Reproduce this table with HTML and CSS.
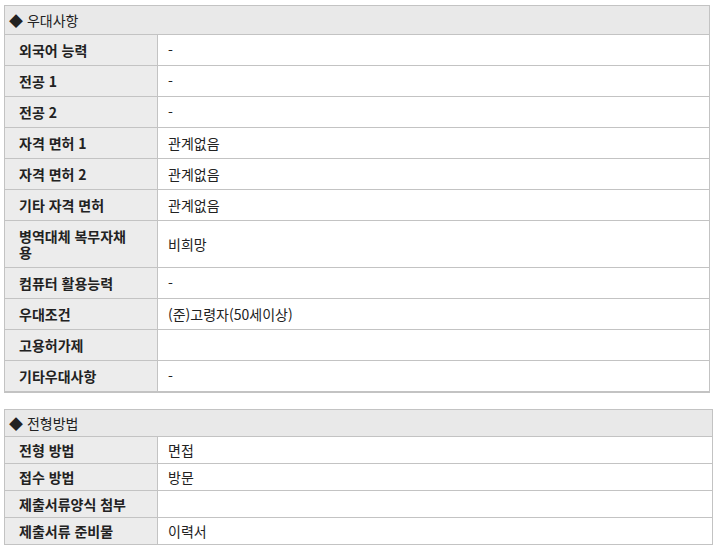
FILE: index.html
```html
<!DOCTYPE html>
<html lang="ko">
<head>
<meta charset="utf-8">
<link rel="stylesheet" href="styles.css">
</head>
<body>
<table class="info info-first">
  <colgroup><col class="c-label"><col class="c-value"></colgroup>
  <tr><th colspan="2" class="sec">◆ 우대사항</th></tr>
  <tr><th>외국어 능력</th><td>-</td></tr>
  <tr><th>전공 1</th><td>-</td></tr>
  <tr><th>전공 2</th><td>-</td></tr>
  <tr><th>자격 면허 1</th><td>관계없음</td></tr>
  <tr><th>자격 면허 2</th><td>관계없음</td></tr>
  <tr><th>기타 자격 면허</th><td>관계없음</td></tr>
  <tr><th>병역대체 복무자채용</th><td>비희망</td></tr>
  <tr><th>컴퓨터 활용능력</th><td>-</td></tr>
  <tr><th>우대조건</th><td>(준)고령자(50세이상)</td></tr>
  <tr><th>고용허가제</th><td></td></tr>
  <tr><th>기타우대사항</th><td>-</td></tr>
</table>
<table class="info info-second">
  <colgroup><col class="c-label"><col class="c-value"></colgroup>
  <tr><th colspan="2" class="sec">◆ 전형방법</th></tr>
  <tr><th>전형 방법</th><td>면접</td></tr>
  <tr><th>접수 방법</th><td>방문</td></tr>
  <tr><th>제출서류양식 첨부</th><td></td></tr>
  <tr><th>제출서류 준비물</th><td>이력서</td></tr>
</table>
</body>
</html>
```
FILE: styles.css
```css
html, body {
  margin: 0;
  padding: 0;
  background: #ffffff;
}
body {
  font-family: "Noto Sans CJK KR", "Noto Sans", sans-serif;
  font-size: 14px;
  color: #222222;
}
.info {
  border-collapse: collapse;
  table-layout: fixed;
  margin-left: 4px;
}
.c-label {
  width: 153px;
}
.info th, .info td {
  border: 1px solid #c3c3c3;
  text-align: left;
  vertical-align: middle;
  line-height: 16px;
}
.info th {
  background: #ececec;
  font-weight: bold;
  padding: 7px 22px 7px 14px;
}
.info td {
  background: #ffffff;
  padding: 7px 10px;
}
.info th.sec {
  background: #e9e9e9;
  font-weight: normal;
  padding: 6px 4px 6px 4px;
  height: 16px;
}
.info-first {
  width: 706px;
  margin-top: 5px;
}
.info-first tr:last-child th, .info-first tr:last-child td {
  border-bottom: 2px solid #c3c3c3;
}
.info-second {
  width: 709px;
  margin-top: 16px;
}
.info-second th, .info-second td {
  padding-top: 5px;
  padding-bottom: 5px;
}
.info-second th.sec {
  padding: 5px 4px;
}
```
